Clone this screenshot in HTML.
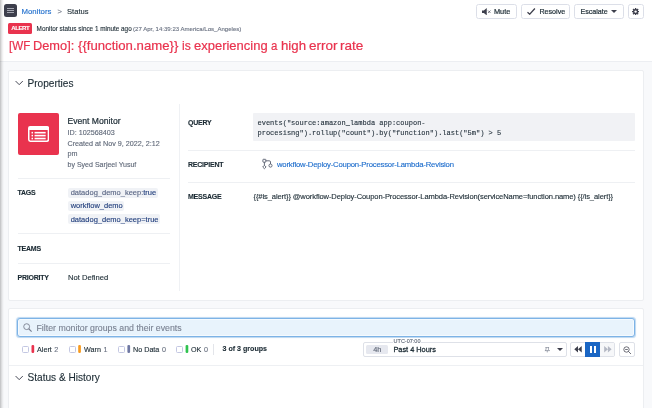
<!DOCTYPE html>
<html><head><meta charset="utf-8">
<style>
*{box-sizing:border-box;margin:0;padding:0}
html,body{width:652px;height:408px;overflow:hidden;background:#fff}
body{font-family:"Liberation Sans",sans-serif;color:#1c2b34;position:relative;font-size:8px;-webkit-text-stroke-width:0.12px}
.abs{position:absolute;white-space:nowrap}
#shadow{left:0;top:0;width:3.7px;height:408px;background:linear-gradient(90deg,rgba(0,0,0,.24) 0,rgba(0,0,0,.12) 35%,rgba(0,0,0,.04) 70%,rgba(0,0,0,0) 100%);z-index:9}
#graybg{left:0;top:61px;width:652px;height:347px;background:#f8f9fb;border-top:1px solid #eceef2}
.card{background:#fff;border:1px solid #eceef1;border-radius:2px}
.btn{-webkit-text-stroke:0.2px #1c2b34;border:1px solid #dcdfe8;border-radius:2.5px;height:15.2px;top:3.500px;background:#fff;font-size:7.4px;line-height:13px;color:#1c2b34}
.lbl{font-weight:bold;font-size:7px;color:#1c2b34;letter-spacing:-0.22px}
.hr{height:1px;background:#eef0f3}
.tag{background:#f0f2f6;border-radius:2px;height:10px;line-height:10px;font-size:7.5px;color:#24407e;padding:0 1.6px 0 2.5px;left:68.2px}
.tag i{font-style:normal;color:#5a6684}
.meta{font-size:7.2px;color:#5f6878;left:67.5px}
.cb{width:6.8px;height:6.8px;margin-left:-0.3px;border:1px solid #c3c7e2;border-radius:1.5px;background:#fff;top:346px}
.bar{width:2.7px;height:7.4px;border-radius:1.2px;top:345.6px}
.ft{font-size:7.2px;top:344.5px;line-height:9px;color:#1c2b34}
.ft i{font-style:normal;color:#6a7282;margin-left:0.5px}
#wrap{position:absolute;left:0;top:0;width:652px;height:408px;overflow:hidden;will-change:transform;opacity:.999}
.tw{position:absolute;top:0;display:inline-block;transform-origin:0 75%;white-space:pre}
</style></head><body><div id="wrap">
<div class="abs" id="shadow"></div>

<!-- top bar -->
<div class="abs" style="left:4.2px;top:4.3px;width:12.7px;height:12.6px;background:#3d3f4c;border-radius:2.5px">
 <div class="abs" style="left:3.3px;top:3.3px;width:6.5px;height:1px;background:#a6a8b2"></div>
 <div class="abs" style="left:3.3px;top:5.75px;width:6.5px;height:1px;background:#a6a8b2"></div>
 <div class="abs" style="left:3.3px;top:8.2px;width:6.5px;height:1px;background:#a6a8b2"></div>
</div>
<div class="abs" style="left:21.5px;top:6.5px;font-size:7.8px;line-height:10px;color:#1c6ccc">Monitors</div>
<div class="abs" style="left:57.5px;top:6.5px;font-size:7.6px;line-height:10px;color:#6a7282">&gt;</div>
<div class="abs" style="left:67px;top:6.5px;font-size:7.6px;line-height:10px;color:#1c2b34">Status</div>

<div class="abs" style="left:8.2px;top:23.4px;width:23.8px;height:10.2px;background:#e9334e;border-radius:1.5px;color:#fff;font-weight:bold;font-size:6.1px;letter-spacing:-0.4px;text-indent:0.4px;line-height:10.4px;text-align:center">ALERT</div>
<div class="abs" style="left:36.6px;top:24.2px;font-size:6.36px;line-height:10px;color:#1c2b34">Monitor status since 1 minute ago<span style="color:#6a7282;font-size:6.06px;margin-left:1.4px">(27 Apr, 14:39:23 America/Los_Angeles)</span></div>
<div class="abs" id="title" style="left:0;top:36.1px;width:400px;height:19px;font-size:13.6px;line-height:19px;color:#e9334e;-webkit-text-stroke:0.22px #e9334e"><span class="tw" style="left:8.7px;transform:translateY(0.35px) scaleX(0.855)">[WF</span><span class="tw" style="left:33.1px;transform:translateY(0.35px) scaleX(0.942)">Demo]:</span><span class="tw" style="left:78.3px;transform:translateY(0.35px) scaleX(0.969)">{{function.name}}</span><span class="tw" style="left:182.4px;transform:translateY(0.35px) scaleX(0.889)">is</span><span class="tw" style="left:193.7px;transform:translateY(0.35px) scaleX(0.955)">experiencing</span><span class="tw" style="left:270.7px;transform:translateY(0.35px) scaleX(0.841)">a</span><span class="tw" style="left:280.7px;transform:translateY(0.35px) scaleX(0.975)">high</span><span class="tw" style="left:308.8px;transform:translateY(0.35px) scaleX(0.994)">error</span><span class="tw" style="left:340.2px;transform:translateY(0.35px) scaleX(0.999)">rate</span></div>

<!-- buttons -->
<div class="abs btn" style="left:475.8px;width:41.2px">
  <svg class="abs" style="left:5.4px;top:3.6px" width="9.500" height="7.400" viewBox="0 0 18 14"><path d="M0 4.500h3.500L9 0v14L3.500 9.500H0z" fill="#3d3f4c"/><path d="M11.500 4.800l4.600 4.600M16.100 4.800l-4.600 4.600" stroke="#3d3f4c" stroke-width="1.300" fill="none"/></svg>
  <span class="abs" style="left:17.1px;top:0.9px">Mute</span></div>
<div class="abs btn" style="left:521px;width:49.4px">
  <svg class="abs" style="left:5.2px;top:3.7px" width="8.400" height="7" viewBox="0 0 17 14"><path d="M1 8.500l4.500 4L16 1" stroke="#3d3f4c" stroke-width="2.600" fill="none"/></svg>
  <span class="abs" style="left:17.4px;top:1.3px;font-size:7.15px">Resolve</span></div>
<div class="abs btn" style="left:574.4px;width:49.6px">
  <span class="abs" style="left:5px;top:1.3px;font-size:7.15px">Escalate</span>
  <div class="abs" style="left:35.8px;top:5.4px;border-left:3px solid transparent;border-right:3px solid transparent;border-top:3px solid #3d3f4c"></div></div>
<div class="abs btn" style="left:628.2px;width:15.8px">
  <svg class="abs" style="left:3.1px;top:3.2px" width="7.2" height="7.2" viewBox="0 0 14 14"><circle cx="7" cy="7" r="3.4" fill="none" stroke="#3d3f4c" stroke-width="3.2"/><g stroke="#3d3f4c" stroke-width="2.6"><path d="M7 0v14M0 7h14M2 2l10 10M12 2L2 12"/></g><circle cx="7" cy="7" r="2.300" fill="#fff"/></svg></div>

<div class="abs" id="graybg"></div>

<!-- card 1 -->
<div class="abs card" style="left:7.8px;top:69.6px;width:636px;height:231.4px"></div>
<svg class="abs" style="left:15.3px;top:80px" width="8.400" height="6.300" viewBox="0 0 14 10"><path d="M1 1.500l6 6 6-6" stroke="#3d3f4c" stroke-width="1.600" fill="none"/></svg>
<div class="abs" style="left:27.5px;top:77px;font-size:10.1px;line-height:14px;color:#1c2b34">Properties</div>

<div class="abs" style="left:17.6px;top:112.7px;width:41.2px;height:42px;background:#e9334e;border-radius:2px"></div>
<svg class="abs" style="left:27.8px;top:125.8px" width="21.2" height="16" viewBox="0 0 42 30" preserveAspectRatio="none"><rect x="1.5" y="1.5" width="39" height="27" rx="3" fill="none" stroke="#fff" stroke-width="3"/><rect x="1.5" y="1.5" width="39" height="6" fill="#fff"/><g fill="#fff"><rect x="7" y="11" width="3" height="3"/><rect x="13" y="11" width="22" height="3"/><rect x="7" y="16.5" width="3" height="3"/><rect x="13" y="16.5" width="22" height="3"/><rect x="7" y="22" width="3" height="3"/><rect x="13" y="22" width="22" height="3"/></g></svg>

<div class="abs" style="left:67.5px;top:115.9px;font-size:8.6px;line-height:11px;color:#1c2b34;-webkit-text-stroke:0.2px #1c2b34">Event Monitor</div>
<div class="abs meta" style="top:127.5px;line-height:10px">ID: 102568403</div>
<div class="abs meta" style="top:138.5px;line-height:10px">Created at Nov 9, 2022, 2:12</div>
<div class="abs meta" style="top:148.5px;line-height:10px">pm</div>
<div class="abs meta" style="top:159.5px;line-height:10px;font-size:7.05px">by Syed Sarjeel Yusuf</div>

<div class="abs hr" style="left:17.5px;top:177.5px;width:152.5px"></div>
<div class="abs lbl" style="left:17.5px;top:187.5px;line-height:10px">TAGS</div>
<div class="abs tag" style="top:187.6px"><i>datadog_demo_keep:</i>true</div>
<div class="abs tag" style="top:201px;line-height:10.8px">workflow_demo</div>
<div class="abs tag" style="top:214.3px;line-height:11.2px">datadog_demo_keep=true</div>
<div class="abs hr" style="left:17.5px;top:233px;width:152.5px"></div>
<div class="abs lbl" style="left:17.5px;top:243.5px;line-height:10px">TEAMS</div>
<div class="abs hr" style="left:17.5px;top:262.6px;width:152.5px"></div>
<div class="abs lbl" style="left:17.5px;top:272.5px;line-height:10px">PRIORITY</div>
<div class="abs" style="left:68px;top:272.5px;font-size:7.6px;line-height:10px;color:#1c2b34">Not Defined</div>

<div class="abs" style="left:178.5px;top:104px;width:1px;height:187px;background:#eff1f4"></div>

<div class="abs lbl" style="left:188px;top:117.5px;line-height:10px">QUERY</div>
<div class="abs" style="left:253px;top:113px;width:381.5px;height:28px;background:#f1f2f5;border-radius:1px"></div>
<div class="abs" style="left:257.5px;top:117.5px;font-family:'Liberation Mono',monospace;font-size:7px;line-height:10px;color:#27343f;-webkit-text-stroke:0.12px #27343f">events("source:amazon_lambda app:coupon-<br>procesisng").rollup("count").by("function").last("5m") &gt; 5</div>
<div class="abs hr" style="left:188px;top:149.5px;width:446.5px"></div>
<div class="abs lbl" style="left:188px;top:159.5px;line-height:10px">RECIPIENT</div>
<svg class="abs" style="left:262.3px;top:158.3px" width="12" height="12" viewBox="0 0 12 12"><g fill="none" stroke="#565c6c" stroke-width="0.9"><rect x="0.9" y="1.3" width="2.9" height="2.9" rx="0.4"/><path d="M2.400 7.300l1.700 1.700-1.700 1.700L0.700 9z"/><circle cx="8.500" cy="7.600" r="1.550"/><path d="M3.800 2.800H7.300Q8.500 2.800 8.500 4V6M2.400 4.200V7.300"/></g></svg>
<div class="abs" style="left:277px;top:159.5px;font-size:7.7px;letter-spacing:-0.18px;line-height:10px;color:#1c6ccc">workflow-Deploy-Coupon-Processor-Lambda-Revision</div>
<div class="abs hr" style="left:188px;top:182px;width:446.5px"></div>
<div class="abs lbl" style="left:188px;top:192px;line-height:10px">MESSAGE</div>
<div class="abs" style="left:253.5px;top:192px;font-size:7.55px;letter-spacing:-0.1px;line-height:10px;color:#1c2b34">{{#is_alert}} @workflow-Deploy-Coupon-Processor-Lambda-Revision(serviceName=function.name) {{/is_alert}}</div>

<!-- card 2 -->
<div class="abs card" style="left:7.8px;top:307.6px;width:636px;height:110px"></div>
<div class="abs" style="left:17px;top:317.6px;width:617.6px;height:19.4px;background:#e8f3fc;border:1px solid #7db3e6;border-radius:3px;box-shadow:0 0 0.8px 0.5px rgba(125,179,230,.5),inset 0 0 0 0.8px rgba(255,255,255,.75)"></div>
<svg class="abs" style="left:23px;top:323.3px" width="9" height="9" viewBox="0 0 16 16"><circle cx="6.5" cy="6.5" r="5.200" fill="none" stroke="#7a8090" stroke-width="1.600"/><path d="M10.2 10.2L15.300 15.300" stroke="#7a8090" stroke-width="2"/></svg>
<div class="abs" style="left:36.5px;top:321.7px;font-size:8.78px;line-height:12px;color:#7a8292">Filter monitor groups and their events</div>

<div class="abs cb" style="left:22.3px"></div><svg class="abs" style="left:30px;top:344px" width="6" height="10" viewBox="0 0 6 10"><rect x="1.50" y="0.9" width="2.7" height="8.1" rx="1.2" fill="#e9334e"/></svg>
<div class="abs ft" style="left:37px">Alert <i>2</i></div>
<div class="abs cb" style="left:69.3px"></div><svg class="abs" style="left:77px;top:344px" width="6" height="10" viewBox="0 0 6 10"><rect x="1.20" y="0.9" width="2.7" height="8.1" rx="1.2" fill="#f79a1f"/></svg>
<div class="abs ft" style="left:84px">Warn <i>1</i></div>
<div class="abs cb" style="left:118.3px"></div><svg class="abs" style="left:126px;top:344px" width="6" height="10" viewBox="0 0 6 10"><rect x="1.40" y="0.9" width="2.7" height="8.1" rx="1.2" fill="#6f78a3"/></svg>
<div class="abs ft" style="left:133px">No Data <i>0</i></div>
<div class="abs cb" style="left:176.6px"></div><svg class="abs" style="left:184px;top:344px" width="6" height="10" viewBox="0 0 6 10"><rect x="1.60" y="0.9" width="2.7" height="8.1" rx="1.2" fill="#2fc24f"/></svg>
<div class="abs ft" style="left:191px">OK <i>0</i></div>
<div class="abs" style="left:212.8px;top:344px;width:1px;height:10.5px;background:#e3e5ea"></div>
<div class="abs ft" style="left:222.5px;font-weight:bold;font-size:7.1px">3 of 3 groups</div>

<!-- time picker -->
<div class="abs" style="left:363.2px;top:341.7px;width:203.6px;height:15px;border:1px solid #dee1e8;border-radius:2px;background:#fff"></div>
<div class="abs" style="left:393px;top:338px;width:28px;height:6px;background:#fff;font-size:5.500px;line-height:6px;color:#5f6878;text-align:center">UTC-07:00</div>
<div class="abs" style="left:366.2px;top:344.6px;width:22.2px;height:9.6px;background:#e6e8ef;border-radius:1.5px;font-size:7.4px;line-height:10px;color:#5a6272;text-align:center">4h</div>
<div class="abs" style="left:393.4px;top:344.5px;font-size:7.4px;letter-spacing:-0.02px;line-height:10px;color:#1c2b34;-webkit-text-stroke:0.28px #1c2b34">Past 4 Hours</div>
<svg class="abs" style="left:544px;top:346.8px" width="6.500" height="5.800" viewBox="0 0 14 16" preserveAspectRatio="none"><path d="M3 1h8M4.5 1v6L2 10h10L9.500 7V1M7 10v5" fill="none" stroke="#6a7282" stroke-width="1.5"/></svg>
<div class="abs" style="left:556.8px;top:348.2px;border-left:3px solid transparent;border-right:3px solid transparent;border-top:3px solid #3d3f4c"></div>

<div class="abs" style="left:570.4px;top:341.7px;width:44.2px;height:15px;border:1px solid #dee1e8;border-radius:2px;background:#fff"></div>
<svg class="abs" style="left:574.2px;top:346.2px" width="8" height="6.400" viewBox="0 0 14 12"><path d="M7 0v12L0 6zM14 0v12L7 6z" fill="#3d3f4c"/></svg>
<div class="abs" style="left:585.2px;top:341.7px;width:15px;height:15px;background:#1a66c4"></div>
<div class="abs" style="left:590.1px;top:345.7px;width:2px;height:7px;background:#fff"></div>
<div class="abs" style="left:594.1px;top:345.7px;width:2px;height:7px;background:#fff"></div>
<div class="abs" style="left:600.2px;top:342.7px;width:13.4px;height:13px;background:#f6f7f9"></div><svg class="abs" style="left:603.8px;top:346.2px" width="7.800" height="6.400" viewBox="0 0 14 12"><path d="M0 0v12l7-6zM7 0v12l7-6z" fill="#b4b8c4"/></svg>
<div class="abs" style="left:619px;top:341.7px;width:15.6px;height:15px;border:1px solid #dee1e8;border-radius:2px;background:#fff"></div>
<svg class="abs" style="left:623.2px;top:345.8px" width="8.600" height="8.600" viewBox="0 0 16 16"><circle cx="6.5" cy="6.5" r="5" fill="none" stroke="#3d3f4c" stroke-width="1.4"/><path d="M10.2 10.2L15 15M4 6.500h5" stroke="#3d3f4c" stroke-width="1.4"/></svg>

<div class="abs hr" style="left:9px;top:365px;width:633.500px"></div>
<svg class="abs" style="left:15.3px;top:375px" width="8.400" height="6.300" viewBox="0 0 14 10"><path d="M1 1.500l6 6 6-6" stroke="#3d3f4c" stroke-width="1.600" fill="none"/></svg>
<div class="abs" style="left:27.5px;top:371px;font-size:10.1px;line-height:14px;color:#1c2b34">Status &amp; History</div>
</div></body></html>
